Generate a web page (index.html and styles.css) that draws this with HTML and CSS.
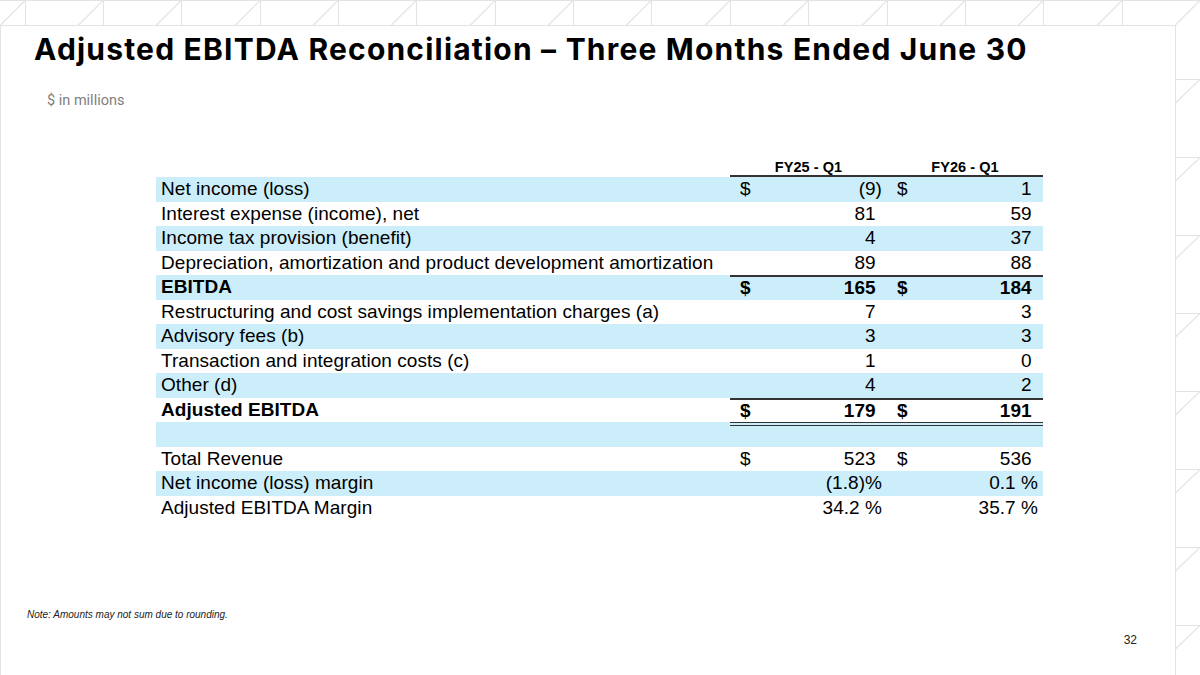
FILE: index.html
```html
<!DOCTYPE html>
<html lang="en">
<head>
<meta charset="utf-8">
<title>Adjusted EBITDA Reconciliation</title>
<link rel="stylesheet" href="styles.css">
</head>
<body>
<div class="slide">
  <svg class="deco" width="1200" height="675" viewBox="0 0 1200 675" aria-hidden="true">
    <path d="M0 0.5H1200
      M25.5 0V25 M103.5 0V25 M181.5 0V25 M260.5 0V25 M338.5 0V25 M416.5 0V25 M495.5 0V25 M573.5 0V25 M651.5 0V25 M730.5 0V25 M808.5 0V25 M887.5 0V25 M965.5 0V25 M1043.5 0V25 M1122.5 0V25
      M0.5 25L25.5 0 M78.5 25L103.5 0 M156.5 25L181.5 0 M235.5 25L260.5 0 M313.5 25L338.5 0 M391.5 25L416.5 0 M470.5 25L495.5 0 M548.5 25L573.5 0 M626.5 25L651.5 0 M705.5 25L730.5 0 M783.5 25L808.5 0 M862.5 25L887.5 0 M940.5 25L965.5 0 M1018.5 25L1043.5 0 M1097.5 25L1122.5 0 M1175.5 25L1200 0.5
      M1175 79.5H1200 M1175 157.5H1200 M1175 235.5H1200 M1175 313.5H1200 M1175 391.5H1200 M1175 469.5H1200 M1175 547.5H1200 M1175 625.5H1200
      M1175.5 103L1200 79.5 M1175.5 181L1200 157.5 M1175.5 259L1200 235.5 M1175.5 337L1200 313.5 M1175.5 415L1200 391.5 M1175.5 493L1200 469.5 M1175.5 571L1200 547.5 M1175.5 649L1200 625.5"/>
  </svg>
  <div class="panel">
    <h1 class="title">Adjusted EBITDA Reconciliation – Three Months Ended June 30</h1>
    <div class="unit">$ in millions</div>
    <div class="recon">
      <div class="row head"><div class="label"></div><div class="hcell">FY25 - Q1</div><div class="hcell">FY26 - Q1</div></div>
      <div class="row band"><div class="label">Net income (loss)</div><div class="val"><span>$</span><span class="num">(9)</span></div><div class="val"><span>$</span><span class="num sp">1</span></div></div>
      <div class="row"><div class="label">Interest expense (income), net</div><div class="val"><span class="num sp">81</span></div><div class="val"><span class="num sp">59</span></div></div>
      <div class="row band"><div class="label">Income tax provision (benefit)</div><div class="val"><span class="num sp">4</span></div><div class="val"><span class="num sp">37</span></div></div>
      <div class="row"><div class="label">Depreciation, amortization and product development amortization</div><div class="val"><span class="num sp">89</span></div><div class="val"><span class="num sp">88</span></div></div>
      <div class="row band bold total"><div class="label">EBITDA</div><div class="val"><span>$</span><span class="num sp">165</span></div><div class="val"><span>$</span><span class="num sp">184</span></div></div>
      <div class="row"><div class="label">Restructuring and cost savings implementation charges (a)</div><div class="val"><span class="num sp">7</span></div><div class="val"><span class="num sp">3</span></div></div>
      <div class="row band"><div class="label">Advisory fees (b)</div><div class="val"><span class="num sp">3</span></div><div class="val"><span class="num sp">3</span></div></div>
      <div class="row"><div class="label">Transaction and integration costs (c)</div><div class="val"><span class="num sp">1</span></div><div class="val"><span class="num sp">0</span></div></div>
      <div class="row band"><div class="label">Other (d)</div><div class="val"><span class="num sp">4</span></div><div class="val"><span class="num sp">2</span></div></div>
      <div class="row bold total"><div class="label">Adjusted EBITDA</div><div class="val"><span>$</span><span class="num sp">179</span></div><div class="val"><span>$</span><span class="num sp">191</span></div></div>
      <div class="row band dbl"><div class="label"></div><div class="val"></div><div class="val"></div></div>
      <div class="row"><div class="label">Total Revenue</div><div class="val"><span>$</span><span class="num sp">523</span></div><div class="val"><span>$</span><span class="num sp">536</span></div></div>
      <div class="row band"><div class="label">Net income (loss) margin</div><div class="val"><span class="num">(1.8)%</span></div><div class="val"><span class="num">0.1 %</span></div></div>
      <div class="row"><div class="label">Adjusted EBITDA Margin</div><div class="val"><span class="num">34.2 %</span></div><div class="val"><span class="num">35.7 %</span></div></div>
    </div>
    <div class="note">Note: Amounts may not sum due to rounding.</div>
    <div class="page">32</div>
  </div>
</div>
</body>
</html>
```

FILE: styles.css
```css
* { box-sizing: border-box; }
html, body { margin: 0; padding: 0; background: #ffffff; }

.slide {
  position: relative;
  width: 1200px;
  height: 675px;
  overflow: hidden;
  background: #ffffff;
  font-family: "Liberation Sans", Arial, sans-serif;
  color: #000000;
}

.deco {
  position: absolute;
  left: 0;
  top: 0;
}
.deco path {
  stroke: #e3e3e3;
  stroke-width: 1.1;
  fill: none;
}

.panel {
  position: relative;
  margin-top: 25px;
  width: 1176px;
  height: 700px;
  border: 1px solid #e3e3e3;
  border-bottom: none;
  background: #ffffff;
  display: flex;
  flex-direction: column;
}

.title {
  margin: 5px 0 0 33px;
  height: 36px;
  font-family: Inter, "Open Sans", sans-serif;
  font-weight: 700;
  font-size: 30px;
  line-height: 36px;
  letter-spacing: 1.2px;
  white-space: nowrap;
  color: #000000;
}

.unit {
  margin: 25px 0 0 46px;
  height: 18px;
  font-family: Roboto, "Liberation Sans", sans-serif;
  font-size: 14.5px;
  line-height: 18px;
  color: #808080;
}

.recon {
  margin: 45px 0 0 155px;
  width: 887px;
}

.row {
  display: grid;
  grid-template-columns: 574px 157px 156px;
  height: 24.5px;
  font-size: 19px;
  line-height: 24.5px;
  letter-spacing: 0.05px;
  white-space: nowrap;
}
.row.band { background: #cceefa; }
.row.bold { font-weight: 700; }

.row.head {
  height: 22px;
  font-size: 14.5px;
  font-weight: 700;
  line-height: 16px;
}
.hcell {
  display: flex;
  align-items: flex-end;
  justify-content: center;
  border-bottom: 2px solid #333333;
}

.label { padding-left: 5px; }

.val {
  display: flex;
  justify-content: space-between;
  padding: 0 5px 0 10px;
}
.num { margin-left: auto; }
.num.sp { padding-right: 0.333em; }

.row.total .val {
  border-top: 2px solid #333333;
  line-height: 22.5px;
}
.row.dbl .val {
  border-top: 4px double #333333;
}

.note {
  margin: 89px 0 0 26px;
  font-size: 10px;
  line-height: 12px;
  font-style: italic;
  color: #222222;
}

.page {
  align-self: flex-end;
  margin: 12px 38px 0 0;
  font-size: 12px;
  line-height: 14px;
  color: #222222;
}
```
